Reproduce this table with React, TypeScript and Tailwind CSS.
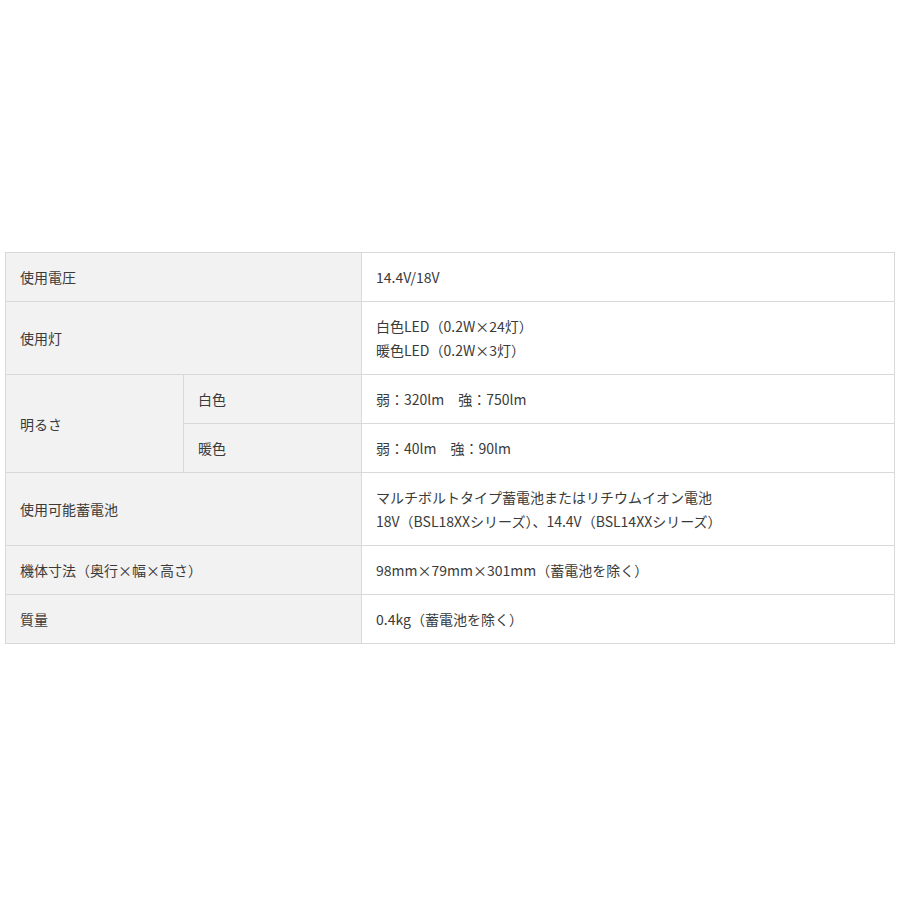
import React from 'react';

const th = 'bg-[#f2f2f2] border border-[#d9d9d9] px-[14px] py-3 text-left font-normal align-middle';
const td = 'bg-white border border-[#d9d9d9] px-[14px] py-3 text-left align-middle';

export default function App() {
    return (
        <div
            className="min-h-[900px] bg-white px-[5px] pt-[252px] text-[14px] leading-[24px] text-[#3a3a3a]"
            style={{ fontFamily: '"Noto Sans CJK JP", "Noto Sans", sans-serif' }}
        >
            <table className="w-full border-collapse table-fixed">
                <colgroup>
                    <col className="w-[178px]" />
                    <col className="w-[178px]" />
                    <col />
                </colgroup>
                <tbody>
                    <tr>
                        <th colSpan={2} className={th}>使用電圧</th>
                        <td className={td}>14.4V/18V</td>
                    </tr>
                    <tr>
                        <th colSpan={2} className={th}>使用灯</th>
                        <td className={td}>
                            白色LED（0.2W×24灯）
                            <br />
                            暖色LED（0.2W×3灯）
                        </td>
                    </tr>
                    <tr>
                        <th rowSpan={2} className={th}>明るさ</th>
                        <th className={th}>白色</th>
                        <td className={td}>弱：320lm　強：750lm</td>
                    </tr>
                    <tr>
                        <th className={th}>暖色</th>
                        <td className={td}>弱：40lm　強：90lm</td>
                    </tr>
                    <tr>
                        <th colSpan={2} className={th}>使用可能蓄電池</th>
                        <td className={td}>
                            マルチボルトタイプ蓄電池またはリチウムイオン電池
                            <br />
                            18V（BSL18XXシリーズ）、14.4V（BSL14XXシリーズ）
                        </td>
                    </tr>
                    <tr>
                        <th colSpan={2} className={th}>機体寸法（奥行×幅×高さ）</th>
                        <td className={td}>98mm×79mm×301mm（蓄電池を除く）</td>
                    </tr>
                    <tr>
                        <th colSpan={2} className={th}>質量</th>
                        <td className={td}>0.4kg（蓄電池を除く）</td>
                    </tr>
                </tbody>
            </table>
        </div>
    );
}
